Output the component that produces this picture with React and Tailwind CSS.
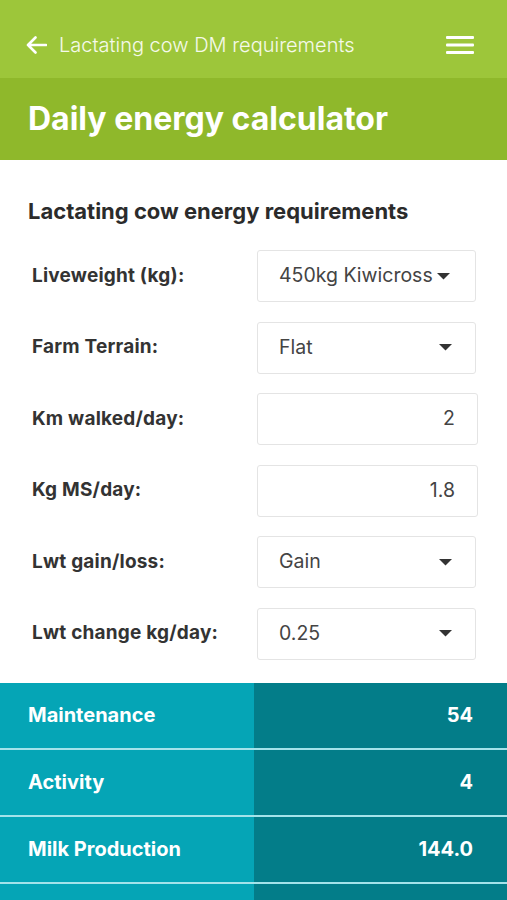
import React from "react";

const Caret = () => (
  <svg width="13" height="7" viewBox="0 0 13 7" className="shrink-0">
    <path d="M0 0 L13 0 L6.5 6.5 Z" fill="#333" />
  </svg>
);

const Row = ({ label, children }) => (
  <div className="flex items-center h-[52px]">
    <div className="w-[257px] pl-[32px] text-[19px] tracking-[0.2px] font-bold text-[#333]">{label}</div>
    {children}
  </div>
);

const SelectBox = ({ value, tight }) => (
  <div className="w-[219px] h-[52px] border border-[#e4e4e4] rounded-[3px] flex items-center pl-[21px] pr-[23px] text-[19.5px] text-[#444]">
    <span>{value}</span>
    {tight ? <span className="ml-[4px]"><Caret /></span> : <span className="ml-auto"><Caret /></span>}
  </div>
);

const NumBox = ({ value }) => (
  <div className="w-[221px] h-[52px] border border-[#e4e4e4] rounded-[3px] flex items-center justify-end pr-[22px] text-[19.5px] text-[#444]">
    {value}
  </div>
);

const ResultRow = ({ label, value, last }) => (
  <div className={"flex h-[67px] " + (last ? "" : "border-b-2 border-[#a4e3ea]")}>
    <div className="w-[254px] bg-[#05a5b6] flex items-center pl-[28px] text-white font-bold text-[20px]">{label}</div>
    <div className="flex-1 bg-[#037d89] flex items-center justify-end pr-[34px] text-white font-bold text-[20px]">{value}</div>
  </div>
);

export default function App() {
  return (
    <div className="w-[507px] h-[900px] overflow-hidden bg-white" style={{ fontFamily: "Inter, Lato, sans-serif" }}>
      <div className="h-[78px] bg-[#9dc63a] flex items-center pt-[12px] pl-[26px] pr-[33px]">
        <svg width="21" height="18" viewBox="0 0 21 18" className="shrink-0">
          <path d="M20 9 H2 M9.5 1.5 L2 9 L9.5 16.5" stroke="white" strokeWidth="2.6" fill="none" strokeLinecap="round" strokeLinejoin="round" />
        </svg>
        <span className="ml-[12px] text-[20px] font-light text-white/90">Lactating cow DM requirements</span>
        <svg width="28" height="18" viewBox="0 0 28 18" className="ml-auto">
          <rect x="0" y="0" width="28" height="3" rx="1" fill="white" />
          <rect x="0" y="7.5" width="28" height="3" rx="1" fill="white" />
          <rect x="0" y="15" width="28" height="3" rx="1" fill="white" />
        </svg>
      </div>
      <div className="h-[82px] bg-[#8fb82b] flex items-center pl-[28px] text-white font-bold text-[32px]">
        Daily energy calculator
      </div>
      <div className="pt-[35px] pb-[23px]">
        <div className="pl-[28px] text-[22px] font-bold text-[#2b2b2b] mb-[22px]">Lactating cow energy requirements</div>
        <div className="flex flex-col gap-[19.5px]">
          <Row label="Liveweight (kg):"><SelectBox value="450kg Kiwicross" tight /></Row>
          <Row label="Farm Terrain:"><SelectBox value="Flat" /></Row>
          <Row label="Km walked/day:"><NumBox value="2" /></Row>
          <Row label="Kg MS/day:"><NumBox value="1.8" /></Row>
          <Row label="Lwt gain/loss:"><SelectBox value="Gain" /></Row>
          <Row label="Lwt change kg/day:"><SelectBox value="0.25" /></Row>
        </div>
      </div>
      <div>
        <ResultRow label="Maintenance" value="54" />
        <ResultRow label="Activity" value="4" />
        <ResultRow label="Milk Production" value="144.0" />
        <ResultRow label="" value="" last />
      </div>
    </div>
  );
}
